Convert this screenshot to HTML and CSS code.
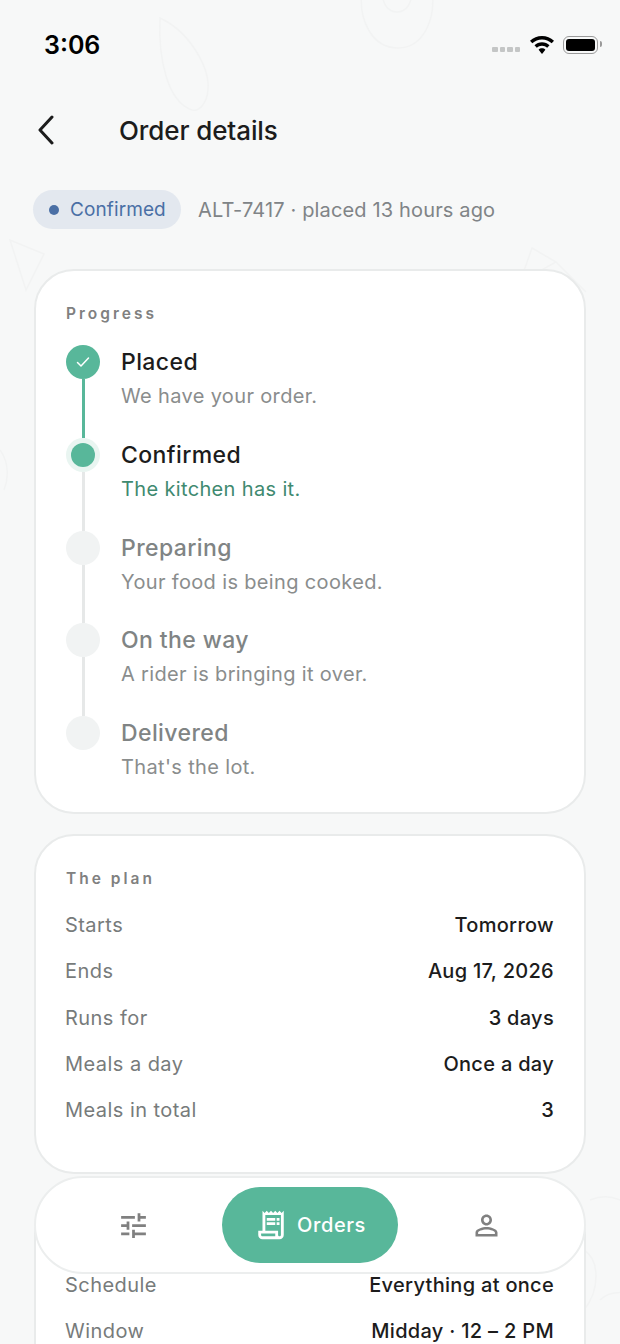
FILE: index.html
```html
<!DOCTYPE html>
<html lang="en">
<head>
	<meta charset="UTF-8">
	<title>Order details</title>
	<link rel="stylesheet" href="styles.css">
</head>
<body>
	<div class="screen">
		<!-- faint food doodles behind everything -->
		<svg class="doodles" width="620" height="1344" viewBox="0 0 620 1344" fill="none">
			<path d="M362 -10c-4 30 10 58 36 58s38-30 34-58"/>
			<path d="M382 -10c0 14 6 22 15 22s15-8 15-22"/>
			<path d="M160 18c30 14 50 50 48 72-1 12-8 22-16 20-24-8-34-50-32-92z"/>
			<path d="M10 240l16 50 18-36zM60 222c20-14 50-16 56 2"/>
			<path d="M532 248l24 14-36 20zM556 262l30 30"/>
			<path d="M0 450c10 14 8 30 4 40"/>
			<path d="M590 1200c20-8 40 0 50 20M584 1250c16 10 16 40 0 60M600 1300c10-10 30-10 40 0"/>
		</svg>

		<div class="statusbar">
			<span class="time">3:06</span>
			<div class="status-icons">
				<span class="cell"><i></i><i></i><i></i><i></i></span>
				<svg width="24" height="18" viewBox="0 0 24 18" fill="#000">
					<path d="M12 0C7.4 0 3.3 1.8 0 4.8l2.3 2.5C5 4.9 8.3 3.4 12 3.4s7 1.5 9.7 3.9L24 4.8C20.7 1.8 16.600 0 12 0z"/>
					<path d="M12 6.300c-2.900 0-5.500 1.100-7.500 3l2.300 2.500c1.400-1.300 3.200-2.100 5.200-2.100s3.800.8 5.200 2.100l2.300-2.500c-2-1.900-4.600-3-7.500-3z"/>
					<path d="M12 12.300c-1.300 0-2.500.5-3.400 1.400L12 18l3.400-4.300c-.9-.9-2.100-1.400-3.400-1.400z"/>
				</svg>
				<span class="battery"><b></b></span>
			</div>
		</div>

		<div class="header">
			<svg class="back" width="18" height="30" viewBox="0 0 18 30" fill="none"><path d="M15 2L3 15l12 13"/></svg>
			<h1>Order details</h1>
		</div>

		<div class="meta">
			<span class="pill"><i></i>Confirmed</span>
			<span class="ref">ALT-7417 · placed 13 hours ago</span>
		</div>

		<section class="card card-progress">
			<div class="label">Progress</div>
			<div class="step done">
				<div class="rail">
					<span class="dot">
						<svg width="16" height="16" viewBox="0 0 16 16" fill="none"><path d="M2.500 8.500l3.500 3.500 7.500-8"/></svg>
					</span>
					<span class="line"></span>
				</div>
				<div class="step-text">
					<div class="step-title">Placed</div>
					<div class="step-sub">We have your order.</div>
				</div>
			</div>
			<div class="step current">
				<div class="rail">
					<span class="dot"><i></i></span>
					<span class="line"></span>
				</div>
				<div class="step-text">
					<div class="step-title">Confirmed</div>
					<div class="step-sub">The kitchen has it.</div>
				</div>
			</div>
			<div class="step">
				<div class="rail">
					<span class="dot"></span>
					<span class="line"></span>
				</div>
				<div class="step-text">
					<div class="step-title">Preparing</div>
					<div class="step-sub">Your food is being cooked.</div>
				</div>
			</div>
			<div class="step">
				<div class="rail">
					<span class="dot"></span>
					<span class="line"></span>
				</div>
				<div class="step-text">
					<div class="step-title">On the way</div>
					<div class="step-sub">A rider is bringing it over.</div>
				</div>
			</div>
			<div class="step last">
				<div class="rail">
					<span class="dot"></span>
				</div>
				<div class="step-text">
					<div class="step-title">Delivered</div>
					<div class="step-sub">That's the lot.</div>
				</div>
			</div>
		</section>

		<section class="card card-plan">
			<div class="label">The plan</div>
			<div class="row"><span>Starts</span><strong>Tomorrow</strong></div>
			<div class="row"><span>Ends</span><strong>Aug 17, 2026</strong></div>
			<div class="row"><span>Runs for</span><strong>3 days</strong></div>
			<div class="row"><span>Meals a day</span><strong>Once a day</strong></div>
			<div class="row"><span>Meals in total</span><strong>3</strong></div>
		</section>

		<section class="card card-plan">
			<div class="label">Delivery</div>
			<div class="row"><span>Schedule</span><strong>Everything at once</strong></div>
			<div class="row"><span>Window</span><strong>Midday · 12 – 2 PM</strong></div>
		</section>

		<nav class="tabbar">
			<div class="tab">
				<svg width="33" height="33" viewBox="0 0 24 24" fill="#808080"><path d="M3 17v2h6v-2H3zM3 5v2h10V5H3zm10 16v-2h8v-2h-8v-2h-2v6h2zM7 9v2H3v2h4v2h2V9H7zm14 4v-2H11v2h10zm-6-4h2V7h4V5h-4V3h-2v6z"/></svg>
			</div>
			<div class="tab active">
				<svg width="34" height="34" viewBox="0 0 24 24" fill="#fff"><path d="M19.500 3.500L18 2l-1.500 1.500L15 2l-1.500 1.500L12 2l-1.500 1.500L9 2 7.500 3.500 6 2v14H3v3c0 1.660 1.340 3 3 3h12c1.660 0 3-1.340 3-3V2l-1.500 1.500zM15 20H6c-.55 0-1-.45-1-1v-1h10v2zm4-1c0 .55-.45 1-1 1s-1-.45-1-1v-3H8V5h11v14z"/><path d="M9 7h6v2H9zm7 0h2v2h-2zm-7 3h6v2H9zm7 0h2v2h-2z"/></svg>
				<span>Orders</span>
			</div>
			<div class="tab">
				<svg width="33" height="33" viewBox="0 0 24 24" fill="#808080"><path d="M12 5.900c1.160 0 2.100.94 2.100 2.100s-.94 2.100-2.100 2.100S9.900 9.160 9.900 8s.94-2.100 2.100-2.100m0 9c2.970 0 6.100 1.460 6.100 2.100v1.100H5.900V17c0-.64 3.130-2.100 6.100-2.100M12 4C9.790 4 8 5.790 8 8s1.790 4 4 4 4-1.790 4-4-1.790-4-4-4zm0 9c-2.670 0-8 1.340-8 4v3h16v-3c0-2.660-5.330-4-8-4z"/></svg>
			</div>
		</nav>
	</div>
</body>
</html>
```

FILE: styles.css
```css
*{
	margin: 0;
	padding: 0;
	box-sizing: border-box;
}
body{
	font-family: Inter, "Noto Sans", sans-serif;
	background: #f7f8f8;
	color: #1c1c1c;
}
.screen{
	position: relative;
	width: 620px;
	height: 1344px;
	overflow: hidden;
	background: #f7f8f8;
}
.doodles{
	position: absolute;
	top: 0;
	left: 0;
}
.doodles path{
	stroke: #f2f3f3;
	stroke-width: 1.500;
}

/* status bar */
.statusbar{
	position: relative;
	display: flex;
	justify-content: space-between;
	align-items: center;
	height: 90px;
	padding: 0 22px 0 44px;
}
.time{
	font-size: 25px;
	font-weight: 600;
	color: #000;
}
.status-icons{
	display: flex;
	align-items: center;
	gap: 9px;
}
.cell{
	display: flex;
	gap: 2px;
	margin: 8px 1px 0 0;
}
.cell i{
	width: 5.500px;
	height: 5px;
	border-radius: 1px;
	background: #c4c6c6;
}
.battery{
	position: relative;
	width: 35px;
	height: 18px;
	padding: 2px;
	border: 1.500px solid #9a9a9a;
	border-radius: 6px;
}
.battery b{
	display: block;
	height: 100%;
	border-radius: 3px;
	background: #000;
}
.battery::after{
	content: "";
	position: absolute;
	top: 4px;
	right: -4.500px;
	width: 2px;
	height: 6px;
	border-radius: 0 2px 2px 0;
	background: #9a9a9a;
}

/* header */
.header{
	position: relative;
	display: flex;
	align-items: center;
	height: 80px;
	padding-left: 37px;
}
.back{
	margin-right: 64px;
}
.back path{
	stroke: #1c1c1c;
	stroke-width: 3;
	stroke-linecap: round;
	stroke-linejoin: round;
}
h1{
	font-size: 26px;
	font-weight: 500;
	letter-spacing: -0.100px;
}
.meta{
	position: relative;
	display: flex;
	align-items: center;
	gap: 17px;
	margin-top: 20px;
	padding-left: 33px;
}
.pill{
	display: flex;
	align-items: center;
	gap: 11px;
	width: 148px;
	height: 39px;
	padding: 0 16px;
	border-radius: 20px;
	background: #e3e8ef;
	color: #4a6fa5;
	font-size: 19px;
	letter-spacing: 0.100px;
	white-space: nowrap;
}
.pill i{
	flex: none;
	width: 10px;
	height: 10px;
	border-radius: 50%;
	background: #4a6fa5;
}
.ref{
	color: #808487;
	font-size: 20px;
	letter-spacing: 0.150px;
}

/* cards */
.card{
	position: relative;
	width: 552px;
	margin: 20px 0 0 34px;
	padding: 34px 30px 0;
	border: 2px solid #e9ebeb;
	border-radius: 40px;
	background: #fff;
}
.card-progress{
	height: 545px;
	margin-top: 40px;
}
.card-plan{
	height: 340px;
}
.label{
	height: 20px;
	margin-bottom: 20px;
	color: #808080;
	font-size: 15.500px;
	line-height: 18px;
	font-weight: 600;
	letter-spacing: 3px;
}
.card-plan .label{
	margin-bottom: 12px;
}

/* progress steps */
.step{
	display: flex;
	gap: 21px;
	height: 92.800px;
}
.rail{
	display: flex;
	flex-direction: column;
	align-items: center;
	width: 34px;
}
.dot{
	display: flex;
	align-items: center;
	justify-content: center;
	flex: none;
	width: 34px;
	height: 34px;
	border-radius: 50%;
	background: #f1f3f3;
}
.line{
	flex: 1;
	width: 3px;
	background: #e6e8e8;
}
.done .dot{
	background: #58b79a;
}
.done .dot path{
	stroke: #fff;
	stroke-width: 1.500;
	stroke-linecap: round;
	stroke-linejoin: round;
}
.done .line{
	background: #58b79a;
}
.current .dot{
	background: #e9f5f1;
}
.current .dot i{
	width: 24px;
	height: 24px;
	border-radius: 50%;
	background: #58b79a;
}
.step-title{
	height: 34px;
	color: #808484;
	font-size: 23px;
	line-height: 34px;
	font-weight: 500;
	letter-spacing: 0.400px;
}
.step-sub{
	height: 34px;
	color: #8a8d8d;
	font-size: 20px;
	line-height: 34px;
	letter-spacing: 0.350px;
}
.done .step-title, .current .step-title{
	color: #1c1c1c;
}
.current .step-sub{
	color: #3f8a70;
}

/* key value rows */
.row{
	display: flex;
	justify-content: space-between;
	align-items: center;
	height: 46.300px;
	font-size: 20px;
}
.row span{
	margin-left: -1px;
	color: #777b7b;
	letter-spacing: 0.450px;
}
.row strong{
	font-weight: 500;
	letter-spacing: 0.300px;
}

/* floating tab bar */
.tabbar{
	position: absolute;
	left: 34px;
	top: 1176px;
	display: flex;
	align-items: center;
	gap: 72px;
	width: 552px;
	height: 98px;
	padding-left: 81px;
	border: 2px solid #eceeee;
	border-radius: 49px;
	background: #fff;
}
.tab{
	display: flex;
	align-items: center;
}
.active{
	gap: 9px;
	justify-content: center;
	width: 176px;
	height: 76px;
	border-radius: 38px;
	background: #58b79a;
	color: #fff;
	font-size: 20px;
	font-weight: 500;
	letter-spacing: 0.600px;
}
```
